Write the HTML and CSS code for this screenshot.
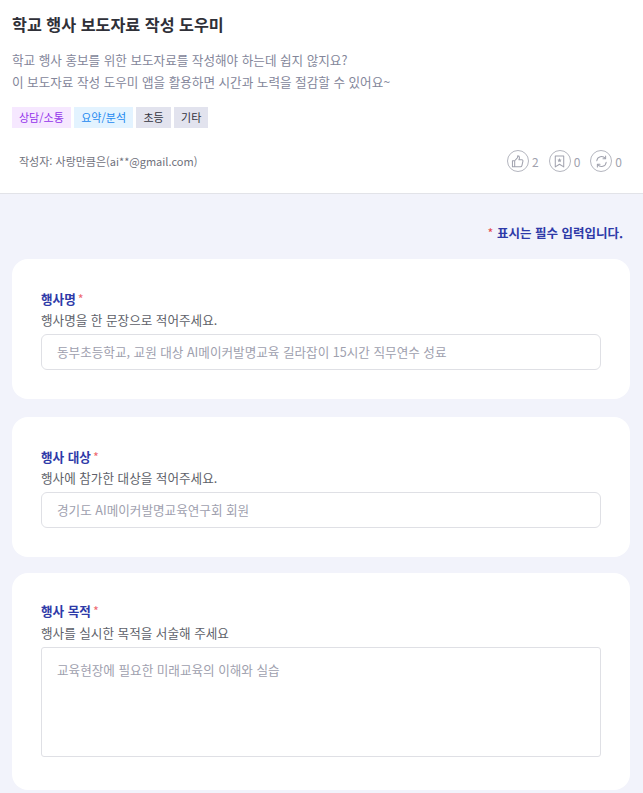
FILE: index.html
```html
<!DOCTYPE html>
<html lang="ko">
  <head>
    <meta charset="UTF-8" />
    <title>학교 행사 보도자료 작성 도우미</title>
    <link rel="stylesheet" href="styles.css">
  </head>
  <body>
    <!-- App info -->
    <header class="app-head">
      <h1>학교 행사 보도자료 작성 도우미</h1>
      <p class="desc">학교 행사 홍보를 위한 보도자료를 작성해야 하는데 쉽지 않지요?<br>이 보도자료 작성 도우미 앱을 활용하면 시간과 노력을 절감할 수 있어요~</p>
      <div class="tags">
        <span class="tag tag-purple">상담/소통</span>
        <span class="tag tag-blue">요약/분석</span>
        <span class="tag tag-gray">초등</span>
        <span class="tag tag-gray">기타</span>
      </div>
      <div class="meta">
        <span class="author">작성자: 사랑만큼은(ai**@gmail.com)</span>
        <div class="stats">
          <span class="stat">
            <span class="stat-icon">
              <svg viewBox="0 0 16 16"><path d="M5 7.200v6.300M5 7.200H2.600v6.300H5M5 7.200l2.600-2.900c.4-.5.6-1 .6-1.600V2c1.200 0 1.900.9 1.900 2 0 .8-.3 1.500-.6 2.200h3.200c.8 0 1.300.7 1.100 1.500l-1.100 4.600c-.2.700-.7 1.200-1.400 1.200H5"/></svg>
            </span>
            2
          </span>
          <span class="stat">
            <span class="stat-icon">
              <svg viewBox="0 0 16 16"><path d="M3.500 2.200h9v11.600L8 10.900l-4.500 2.900z"/><path class="fill" d="M8 4.300l.7 1.500 1.600.2-1.200 1.100.3 1.600L8 7.900l-1.400.8.3-1.600L5.700 6l1.600-.2z"/></svg>
            </span>
            0
          </span>
          <span class="stat">
            <span class="stat-icon">
              <svg viewBox="0 0 16 16"><path d="M3 7.200A5 5 0 0 1 12 4.700M13 8.800A5 5 0 0 1 4 11.300"/><path d="M12.400 2.200v2.900H9.600M3.600 13.800v-2.900h2.800"/></svg>
            </span>
            0
          </span>
        </div>
      </div>
    </header>

    <main class="form-wrap">
      <p class="required-note"><span class="star">*</span> 표시는 필수 입력입니다.</p>

      <section class="card">
        <div class="label">행사명<span class="star">*</span></div>
        <div class="help">행사명을 한 문장으로 적어주세요.</div>
        <input class="field" type="text" placeholder="동부초등학교, 교원 대상 AI메이커발명교육 길라잡이 15시간 직무연수 성료" />
      </section>

      <section class="card">
        <div class="label">행사 대상<span class="star">*</span></div>
        <div class="help">행사에 참가한 대상을 적어주세요.</div>
        <input class="field" type="text" placeholder="경기도 AI메이커발명교육연구회 회원" />
      </section>

      <section class="card card-last">
        <div class="label">행사 목적<span class="star">*</span></div>
        <div class="help">행사를 실시한 목적을 서술해 주세요</div>
        <textarea class="field area" placeholder="교육현장에 필요한 미래교육의 이해와 실습"></textarea>
      </section>
    </main>
  </body>
</html>
```

FILE: styles.css
```css
* {
  box-sizing: border-box;
}

html {
  overflow: hidden;
}

body {
  margin: 0;
  height: 793px;
  overflow: hidden;
  font-family: "Noto Sans CJK KR", "Noto Sans", sans-serif;
  background: #f2f3fb;
  color: #2b2d36;
}

.app-head {
  background: #fff;
  height: 194px;
  padding: 11px 21px 0 12px;
  border-bottom: 1px solid #e2e3e8;
}

h1 {
  margin: 0;
  font-size: 16.2px;
  line-height: 26px;
  font-weight: 700;
  color: #2f3038;
}

.desc {
  margin: 12px 0 0;
  font-size: 12.6px;
  line-height: 22px;
  color: #83869a;
}

.tags {
  display: flex;
  gap: 3.4px;
  margin-top: 14px;
}

.tag {
  padding: 0 7px;
  height: 21px;
  font-size: 11px;
  line-height: 21px;
}

.tag-purple {
  background: #f6e8ff;
  color: #9333ea;
}

.tag-blue {
  background: #e3f3ff;
  color: #2389f0;
}

.tag-gray {
  background: #e2e3ee;
  color: #33343f;
}

.meta {
  display: flex;
  justify-content: space-between;
  align-items: center;
  margin-top: 22px;
  padding-left: 7px;
}

.author {
  font-size: 11px;
  color: #6f717c;
}

.stats {
  display: flex;
  gap: 10px;
}

.stat {
  display: flex;
  align-items: center;
  gap: 3px;
  font-size: 12px;
  color: #a0a2ae;
}

.stat-icon {
  display: flex;
  align-items: center;
  justify-content: center;
  width: 22px;
  height: 22px;
  border: 1px solid #b4b6bf;
  border-radius: 50%;
}

.stat-icon svg {
  width: 15px;
  height: 15px;
  fill: none;
  stroke: #a0a2ae;
  stroke-width: 1.1;
  stroke-linejoin: round;
  stroke-linecap: round;
}

.stat-icon svg .fill {
  fill: #a0a2ae;
  stroke: none;
}

.form-wrap {
  padding: 0 13px 0 12px;
}

.required-note {
  margin: 0;
  padding-top: 29px;
  height: 65px;
  text-align: right;
  padding-right: 7px;
  font-size: 12.5px;
  line-height: 20px;
  font-weight: 700;
  color: #2e3aa8;
}

.star {
  color: #ee6a70;
  font-weight: 400;
  margin-left: 2px;
}

.required-note .star {
  margin: 0;
  color: #e5484d;
}

.card {
  background: #fff;
  border-radius: 16px;
  height: 140px;
  padding: 30px 29px 0;
  margin-bottom: 18px;
}

.card-last {
  height: 217px;
  margin-top: -2px;
  padding-top: 28px;
}

.label {
  font-size: 12.6px;
  line-height: 20px;
  font-weight: 700;
  color: #2e3aa8;
}

.help {
  font-size: 12.6px;
  line-height: 20px;
  color: #5d5f69;
  margin-top: 1px;
  margin-bottom: 4px;
}

.card-last .help {
  margin-top: 2px;
}

.field {
  display: block;
  width: 100%;
  height: 36px;
  padding: 0 15px 2px;
  border: 1px solid #dfe0e5;
  border-radius: 6px;
  background: #fff;
  font-family: inherit;
  font-size: 12.6px;
  color: #2b2d36;
}

.field::placeholder {
  color: #9ea0ae;
  opacity: 1;
}

.area {
  height: 110px;
  padding: 12px 15px;
  border-radius: 3px;
  line-height: 20px;
  resize: none;
}
```
